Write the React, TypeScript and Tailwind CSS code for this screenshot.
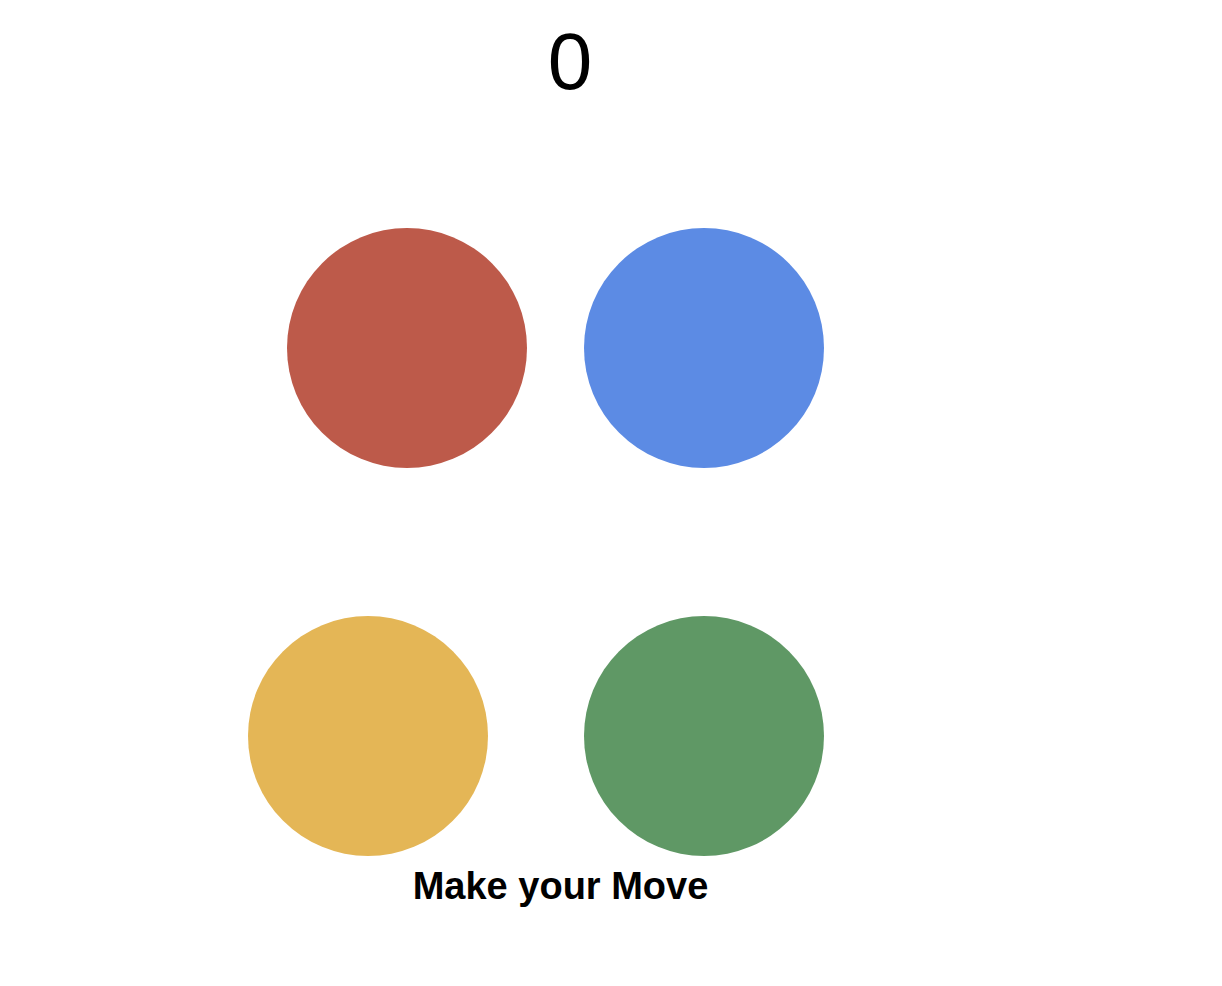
export default function App() {
  return (
    <div className="min-h-screen bg-white font-['Liberation_Sans',Arial,sans-serif] text-black">
      <div className="flex flex-col">
        <div className="w-[1140px] pt-[22px] text-center text-[80px] leading-none">0</div>

        <div className="mt-[126px] flex gap-[57px] pl-[287px]">
          <button className="h-[240px] w-[240px] rounded-full bg-[#bd5a4a]" />
          <button className="h-[240px] w-[240px] rounded-full bg-[#5c8be4]" />
        </div>

        <div className="mt-[148px] flex gap-[96px] pl-[248px]">
          <button className="h-[240px] w-[240px] rounded-full bg-[#e4b656]" />
          <button className="h-[240px] w-[240px] rounded-full bg-[#5f9865]" />
        </div>

        <p className="mt-[11px] w-[1121px] text-center text-[38px] font-bold leading-none">
          Make your Move
        </p>
      </div>
    </div>
  );
}
